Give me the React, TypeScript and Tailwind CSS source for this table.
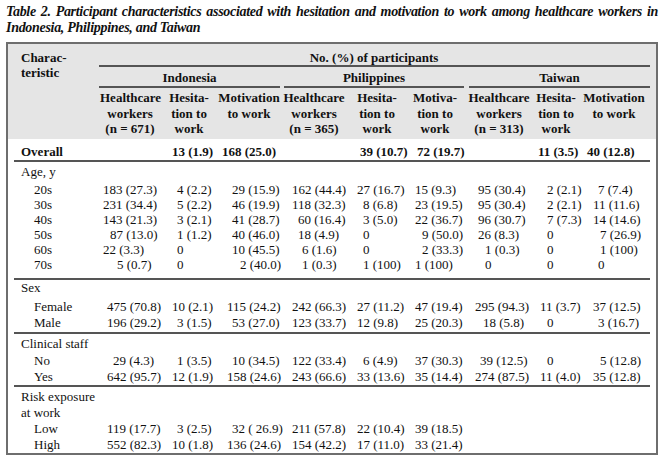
import React from 'react';

type Cell = [string, number] | null;
type Row = { label: string; cells: Cell[] };

const PAD: Record<number, string> = {
  [-6]: '-ml-1.5',
  [-5]: '-ml-[5px]',
  [-2]: '-ml-[2px]',
  0: '',
  2: 'pl-[2px]',
  3: 'pl-[3px]',
  4: 'pl-1',
  5: 'pl-[5px]',
  6: 'pl-1.5',
  7: 'pl-[7px]',
  8: 'pl-2',
  10: 'pl-2.5',
  13: 'pl-[13px]',
  14: 'pl-3.5',
};

const GRID =
  'grid grid-cols-[95px_69px_55px_65px_65px_58px_60px_65px_53px_63px]';

const overall: Cell[] = [
  null,
  ['13 (1.9)', 0],
  ['168 (25.0)', -5],
  null,
  ['39 (10.7)', 3],
  ['72 (19.7)', 2],
  null,
  ['11 (3.5)', -2],
  ['40 (12.8)', -6],
];

const age: Row[] = [
  { label: '20s', cells: [['183 (27.3)', 0], ['4 (2.2)', 5], ['29 (15.9)', 5], ['162 (44.4)', 0], ['27 (16.7)', 0], ['15 (9.3)', 0], ['95 (30.4)', 3], ['2 (2.1)', 7], ['7 (7.4)', 5]] },
  { label: '30s', cells: [['231 (34.4)', 0], ['5 (2.2)', 5], ['46 (19.9)', 5], ['118 (32.3)', 0], ['8 (6.8)', 6], ['23 (19.5)', 0], ['95 (30.4)', 3], ['2 (2.1)', 7], ['11 (11.6)', 0]] },
  { label: '40s', cells: [['143 (21.3)', 0], ['3 (2.1)', 5], ['41 (28.7)', 5], ['60 (16.4)', 6], ['3 (5.0)', 6], ['22 (36.7)', 0], ['96 (30.7)', 3], ['7 (7.3)', 7], ['14 (14.6)', 0]] },
  { label: '50s', cells: [['87 (13.0)', 7], ['1 (1.2)', 5], ['40 (46.0)', 5], ['18 (4.9)', 6], ['0', 6], ['9 (50.0)', 7], ['26 (8.3)', 3], ['0', 7], ['7 (26.9)', 7]] },
  { label: '60s', cells: [['22 (3.3)', 0], ['0', 5], ['10 (45.5)', 5], ['6 (1.6)', 10], ['0', 6], ['2 (33.3)', 7], ['1 (0.3)', 10], ['0', 7], ['1 (100)', 7]] },
  { label: '70s', cells: [['5 (0.7)', 14], ['0', 5], ['2 (40.0)', 13], ['1 (0.3)', 10], ['1 (100)', 6], ['1 (100)', 0], ['0', 10], ['0', 7], ['0', 5]] },
];

const sex: Row[] = [
  { label: 'Female', cells: [['475 (70.8)', 4], ['10 (2.1)', 0], ['115 (24.2)', 0], ['242 (66.3)', 0], ['27 (11.2)', 0], ['47 (19.4)', 0], ['295 (94.3)', 0], ['11 (3.7)', 0], ['37 (12.5)', 0]] },
  { label: 'Male', cells: [['196 (29.2)', 4], ['3 (1.5)', 5], ['53 (27.0)', 5], ['123 (33.7)', 0], ['12 (9.8)', 0], ['25 (20.3)', 0], ['18 (5.8)', 8], ['0', 7], ['3 (16.7)', 5]] },
];

const clinical: Row[] = [
  { label: 'No', cells: [['29 (4.3)', 10], ['1 (3.5)', 5], ['10 (34.5)', 5], ['122 (33.4)', 0], ['6 (4.9)', 6], ['37 (30.3)', 0], ['39 (12.5)', 5], ['0', 7], ['5 (12.8)', 7]] },
  { label: 'Yes', cells: [['642 (95.7)', 4], ['12 (1.9)', 0], ['158 (24.6)', 0], ['243 (66.6)', 0], ['33 (13.6)', 0], ['35 (14.4)', 0], ['274 (87.5)', 0], ['11 (4.0)', 0], ['35 (12.8)', 0]] },
];

const risk: Row[] = [
  { label: 'Low', cells: [['119 (17.7)', 4], ['3 (2.5)', 5], ['32 ( 26.9)', 5], ['211 (57.8)', 0], ['22 (10.4)', 0], ['39 (18.5)', 0], null, null, null] },
  { label: 'High', cells: [['552 (82.3)', 4], ['10 (1.8)', 0], ['136 (24.6)', 0], ['154 (42.2)', 0], ['17 (11.0)', 0], ['33 (21.4)', 0], null, null, null] },
];

const colHeads: { lines: string[]; w: string }[] = [
  { lines: ['Healthcare', 'workers', '(n = 671)'], w: 'w-[60px]' },
  { lines: ['Hesita-', 'tion to', 'work'], w: 'w-[58px]' },
  { lines: ['Motivation', 'to work'], w: 'w-[62px]' },
  { lines: ['Healthcare', 'workers', '(n = 365)'], w: 'w-[68px]' },
  { lines: ['Hesita-', 'tion to', 'work'], w: 'w-[58px]' },
  { lines: ['Motiva-', 'tion to', 'work'], w: 'w-[58px]' },
  { lines: ['Healthcare', 'workers', '(n = 313)'], w: 'w-[70px]' },
  { lines: ['Hesita-', 'tion to', 'work'], w: 'w-[44px]' },
  { lines: ['Motivation', 'to work'], w: 'w-[72px]' },
];

function Rule() {
  return <div className="mx-[6px] h-[2px] bg-[#555]" />;
}

function DataRow({ label, cells, h }: { label: string; cells: Cell[]; h: string }) {
  return (
    <div className={`${GRID} ${h}`}>
      <div className="pl-[26px]">{label}</div>
      {cells.map((c, i) => (
        <div key={i} className="whitespace-pre">
          {c && <span className={`inline-block ${PAD[c[1]]}`}>{c[0]}</span>}
        </div>
      ))}
    </div>
  );
}

function Section({
  title,
  rows,
  h,
  top,
  gap,
  bottom,
}: {
  title: string[];
  rows: Row[];
  h: string;
  top: string;
  gap: string;
  bottom: string;
}) {
  return (
    <div className={`${top} ${bottom}`}>
      {title.map(t => (
        <div key={t} className="h-4 pl-[13px] leading-4">
          {t}
        </div>
      ))}
      <div className={gap}>
        {rows.map(r => (
          <DataRow key={r.label} label={r.label} cells={r.cells} h={h} />
        ))}
      </div>
    </div>
  );
}

export default function App() {
  return (
    <div className="h-[463px] w-[664px] overflow-hidden bg-white text-[#111] [font-family:Liberation_Serif,Times_New_Roman,serif]">
      <div className="px-[6px] pt-[4px] text-[14px] font-bold italic leading-4 tracking-[-0.3px]">
        <div className="whitespace-nowrap text-justify [text-align-last:justify]">
          Table 2. Participant characteristics associated with hesitation and motivation to work among healthcare workers in
        </div>
        <div>Indonesia, Philippines, and Taiwan</div>
      </div>

      <div className="ml-[6px] mt-[6px] w-[652px] border-2 border-[#6e6e6e] text-[13px]">
        <div className="flex h-[95px] bg-[#e5e5e5] font-bold">
          <div className="w-[93px] pl-[13px] pt-[6px] leading-[15px]">
            <div>Charac-</div>
            <div>teristic</div>
          </div>
          <div className="flex-1 pr-[6px] pt-[6px]">
            <div className="h-[15px] text-center leading-[15px]">No. (%) of participants</div>
            <div className="ml-[1px] h-[2px] bg-[#555]" />
            <div className="ml-[1px] mt-[3px] flex">
              <div className="w-[181px]">
                <div className="h-[15px] text-center leading-[15px]">Indonesia</div>
                <div className="mt-[1px] h-[2px] bg-[#555]" />
              </div>
              <div className="ml-[4px] w-[180px]">
                <div className="h-[15px] text-center leading-[15px]">Philippines</div>
                <div className="mt-[1px] h-[2px] bg-[#555]" />
              </div>
              <div className="ml-[5px] flex-1">
                <div className="h-[15px] text-center leading-[15px]">Taiwan</div>
                <div className="mt-[1px] h-[2px] bg-[#555]" />
              </div>
            </div>
            <div className="ml-[2px] mt-[2px] flex">
              {colHeads.map((c, i) => (
                <div key={i} className={`${c.w} shrink-0 whitespace-nowrap text-center leading-[15.5px]`}>
                  {c.lines.map(l => (
                    <div key={l}>{l}</div>
                  ))}
                </div>
              ))}
            </div>
          </div>
        </div>

        <div className="pb-[1px] pt-[5px] font-bold">
          <div className={`${GRID} h-[15px] leading-[15px]`}>
            <div className="pl-[13px]">Overall</div>
            {overall.map((c, i) => (
              <div key={i} className="whitespace-pre">
                {c && <span className={`inline-block ${PAD[c[1]]}`}>{c[0]}</span>}
              </div>
            ))}
          </div>
        </div>
        <Rule />

        <Section title={['Age, y']} rows={age} h="h-[15px] leading-[15px]" top="pt-[2px]" gap="mt-[2px]" bottom="pb-[6px]" />
        <Rule />
        <Section title={['Sex']} rows={sex} h="h-4 leading-4" top="pt-0" gap="mt-[3px]" bottom="pb-[1px]" />
        <Rule />
        <Section title={['Clinical staff']} rows={clinical} h="h-4 leading-4" top="pt-[2px]" gap="mt-[1px]" bottom="pb-0" />
        <Rule />
        <Section
          title={['Risk exposure', 'at work']}
          rows={risk}
          h="h-4 leading-4"
          top="pt-[2px]"
          gap="mt-0"
          bottom="pb-0"
        />
      </div>
    </div>
  );
}
